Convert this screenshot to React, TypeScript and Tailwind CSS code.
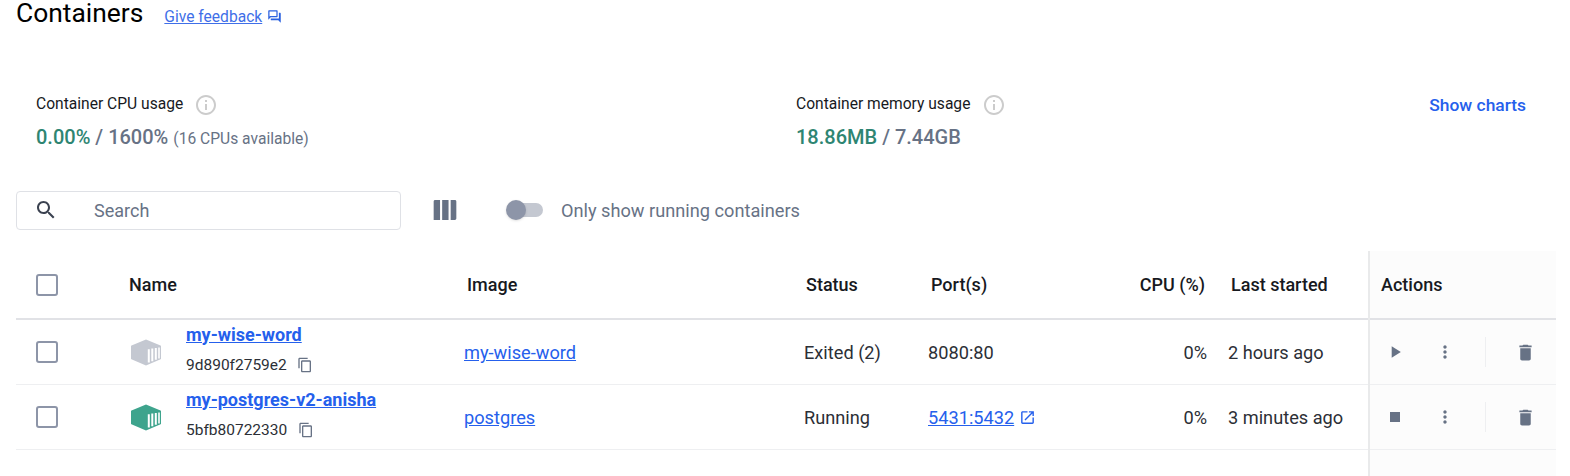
const roboto = 'font-["Roboto",sans-serif]';

function Icon({ d, className }: { d: string; className?: string }) {
    return (
        <svg viewBox="0 0 24 24" fill="currentColor" className={className}>
            <path d={d} />
        </svg>
    );
}

const icons = {
    info: 'M11 7h2v2h-2zm0 4h2v6h-2zm1-9C6.48 2 2 6.48 2 12s4.48 10 10 10 10-4.48 10-10S17.52 2 12 2zm0 18c-4.41 0-8-3.59-8-8s3.59-8 8-8 8 3.59 8 8-3.59 8-8 8z',
    search: 'M15.5 14h-.79l-.28-.27C15.41 12.59 16 11.11 16 9.5 16 5.91 13.09 3 9.5 3S3 5.91 3 9.5 5.91 16 9.5 16c1.61 0 3.09-.59 4.23-1.57l.27.28v.79l5 4.99L20.49 19l-4.99-5zm-6 0C7.01 14 5 11.99 5 9.5S7.01 5 9.5 5 14 7.01 14 9.5 11.99 14 9.5 14z',
    copy: 'M16 1H4c-1.1 0-2 .9-2 2v14h2V3h12V1zm3 4H8c-1.1 0-2 .9-2 2v14c0 1.1.9 2 2 2h11c1.1 0 2-.9 2-2V7c0-1.1-.9-2-2-2zm0 16H8V7h11v14z',
    play: 'M8 5v14l11-7z',
    stop: 'M6 6h12v12H6z',
    more: 'M12 8c1.1 0 2-.9 2-2s-.9-2-2-2-2 .9-2 2 .9 2 2 2zm0 2c-1.1 0-2 .9-2 2s.9 2 2 2 2-.9 2-2-.9-2-2-2zm0 6c-1.1 0-2 .9-2 2s.9 2 2 2 2-.9 2-2-.9-2-2-2z',
    trash: 'M6 19c0 1.1.9 2 2 2h8c1.1 0 2-.9 2-2V7H6v12zM19 4h-3.5l-1-1h-5l-1 1H5v2h14V4z',
    columns: 'M10 19h4.5V5H10v14zM4 19h4.5V5H5c-.55 0-1 .45-1 1v13zM16 5v14h3c.55 0 1-.45 1-1V6c0-.55-.45-1-1-1h-3z',
    open: 'M19 19H5V5h7V3H5c-1.11 0-2 .9-2 2v14c0 1.1.89 2 2 2h14c1.1 0 2-.9 2-2v-7h-2v7zM14 3v2h3.59l-9.83 9.83 1.41 1.41L19 6.41V10h2V3h-7z',
    forum: 'M15 4v7H5.17L4 12.17V4h11m1-2H3c-.55 0-1 .45-1 1v14l4-4h10c.55 0 1-.45 1-1V3c0-.55-.45-1-1-1zm5 4h-2v9H6v2c0 .55.45 1 1 1h11l4 4V7c0-.55-.45-1-1-1z',
};

function ContainerIcon({ className }: { className?: string }) {
    return (
        <svg viewBox="0 0 30 27" className={className}>
            <path d="M15 0.5 29.5 6.5a.6.6 0 0 1 .5.6v12.6a.6.6 0 0 1-.4.6L15 26.5.4 20.3a.6.6 0 0 1-.4-.6V7.1a.6.6 0 0 1 .5-.6z" fill="currentColor" />
            <path d="M16.8 10.2h2v13.3h-2zM20.3 9.6h2v12.6h-2zM23.8 9h2v11.8h-2zM27.2 8.4h1.6v11h-1.6z" fill="#fff" />
        </svg>
    );
}

function Checkbox() {
    return <div className="size-[22px] rounded-[3px] border-[2.5px] border-[#8d95a8] bg-white" />;
}

const rowGrid = 'grid grid-cols-[111px_337px_340px_124px_175px_104px_161px] items-center';

const rows = [
    {
        name: 'my-wise-word',
        id: '9d890f2759e2',
        image: 'my-wise-word',
        status: 'Exited (2)',
        port: '8080:80',
        linked: false,
        started: '2 hours ago',
        iconColor: 'text-[#c4c8d1]',
        running: false,
        copyGap: 'ml-[10px]',
    },
    {
        name: 'my-postgres-v2-anisha',
        id: '5bfb80722330',
        image: 'postgres',
        status: 'Running',
        port: '5431:5432',
        linked: true,
        started: '3 minutes ago',
        iconColor: 'text-[#3ea48d]',
        running: true,
        copyGap: 'ml-[11px]',
    },
];

export default function App() {
    return (
        <div className={`${roboto} flex h-[476px] w-[1570px] flex-col overflow-hidden bg-white pl-4 text-[#17191e]`}>
            {/* Title */}
            <div className="flex h-[26px] items-center">
                <h1 className="text-[26.4px] leading-[26px] text-black">Containers</h1>
                <a href="#" className="ml-[21px] mt-[7px] text-[15.6px] leading-4 text-[#3f6fe8] underline">Give feedback</a>
                <Icon d={icons.forum} className="ml-[5px] mt-[7px] size-[15px] text-[#2b62e0]" />
            </div>

            {/* Usage stats */}
            <div className="mt-[67px] flex h-[58px] pl-5 pr-[44px]">
                <div className="w-[759px]">
                    <div className="flex h-6 items-center text-[15.6px] text-[#17191e]">
                        Container CPU usage
                        <Icon d={icons.info} className="ml-[11px] size-6 text-[#cccccc]" />
                    </div>
                    <div className="mt-[8px] leading-6 text-[#677285]">
                        <span className="text-[20px] font-medium text-[#2e8572]">0.00%</span>
                        <span className="text-[20px] font-medium"> / 1600%</span>
                        <span className="ml-[5px] text-[15.6px]">(16 CPUs available)</span>
                    </div>
                </div>
                <div className="flex-1 pl-px">
                    <div className="flex h-6 items-center text-[15.6px] text-[#17191e]">
                        Container memory usage
                        <Icon d={icons.info} className="ml-[12px] size-6 text-[#cccccc]" />
                    </div>
                    <div className="mt-[8px] text-[20px] font-medium leading-6 text-[#677285]">
                        <span className="text-[#2e8572]">18.86MB</span> / 7.44GB
                    </div>
                </div>
                <a href="#" className="h-6 text-[17.4px] font-medium leading-6 text-[#2560ec]">Show charts</a>
            </div>

            {/* Toolbar */}
            <div className="mt-[39px] flex h-[40px] items-center">
                <div className="flex h-[39px] w-[385px] items-center rounded-[4px] border border-[#dfe1e6] pl-[17px]">
                    <Icon d={icons.search} className="size-6 text-[#3b4250]" />
                    <span className="ml-[36px] mt-px text-lg text-[#677285]">Search</span>
                </div>
                <Icon d={icons.columns} className="ml-[27px] size-[34px] text-[#677285]" />
                <div className="relative ml-[45px] h-[14px] w-9 rounded-full bg-[#c4c8d1]">
                    <div className="absolute -top-[3px] -left-px size-5 rounded-full bg-[#8d95a8] shadow-sm" />
                </div>
                <span className="ml-[18px] mt-px text-[18.2px] text-[#677285]">Only show running containers</span>
            </div>

            {/* Table */}
            <div className="mt-[21px] flex w-[1540px] flex-1">
                <div className="flex flex-col">
                    <div className={`${rowGrid} h-[69px] border-b-2 border-[#e1e2e6] pt-px text-lg font-medium text-[#17191e]`}>
                        <div className="pl-5"><Checkbox /></div>
                        <div className="pl-[2px]">Name</div>
                        <div className="pl-[3px]">Image</div>
                        <div className="pl-[2px]">Status</div>
                        <div className="pl-[3px]">Port(s)</div>
                        <div className="pr-[2px] text-right whitespace-nowrap">CPU (%)</div>
                        <div className="pl-[24px]">Last started</div>
                    </div>
                    {rows.map(r => (
                        <div key={r.id} className={`${rowGrid} h-[65px] border-b border-[#eeeff1] text-[18.2px] text-[#2c2f36]`}>
                            <div className="pl-5"><Checkbox /></div>
                            <div className="flex items-center">
                                <ContainerIcon className={`ml-[4px] h-[27px] w-[30px] ${r.iconColor}`} />
                                <div className="mb-[5px] ml-[25px]">
                                    <a href="#" className="block text-lg font-bold leading-5 text-[#2560ec] underline">{r.name}</a>
                                    <div className="mt-[10px] flex items-center">
                                        <span className="text-[15.5px] leading-5">{r.id}</span>
                                        <Icon d={icons.copy} className={`${r.copyGap} size-4 text-[#677285]`} />
                                    </div>
                                </div>
                            </div>
                            <div className="mt-[2px]"><a href="#" className="text-[#2560ec] underline">{r.image}</a></div>
                            <div className="mt-[2px]">{r.status}</div>
                            <div className="mt-[2px] flex items-center">
                                {r.linked ? (
                                    <>
                                        <a href="#" className="text-[#2560ec] underline">{r.port}</a>
                                        <Icon d={icons.open} className="ml-[5px] size-[17px] text-[#2560ec]" />
                                    </>
                                ) : r.port}
                            </div>
                            <div className="mt-[2px] text-right">0%</div>
                            <div className="mt-[2px] pl-[21px] whitespace-nowrap">{r.started}</div>
                        </div>
                    ))}
                </div>

                {/* Actions column */}
                <div className="flex w-[188px] flex-col border-l-2 border-[#e9eaeb] bg-[#fcfcfc]">
                    <div className="flex h-[69px] items-center border-b-2 border-[#e1e2e6] pl-[11px] pt-px text-lg font-medium text-[#17191e]">Actions</div>
                    {rows.map(r => (
                        <div key={r.id} className="flex h-[65px] items-center border-b border-[#eeeff1] text-[#677285]">
                            <Icon d={r.running ? icons.stop : icons.play} className="ml-[15px] size-5" />
                            <Icon d={icons.more} className="ml-[30px] size-5" />
                            <div className="ml-[30px] h-[30px] w-px bg-[#eeeff1]" />
                            <Icon d={icons.trash} className="ml-[29px] size-[21px]" />
                        </div>
                    ))}
                </div>
            </div>
        </div>
    );
}
